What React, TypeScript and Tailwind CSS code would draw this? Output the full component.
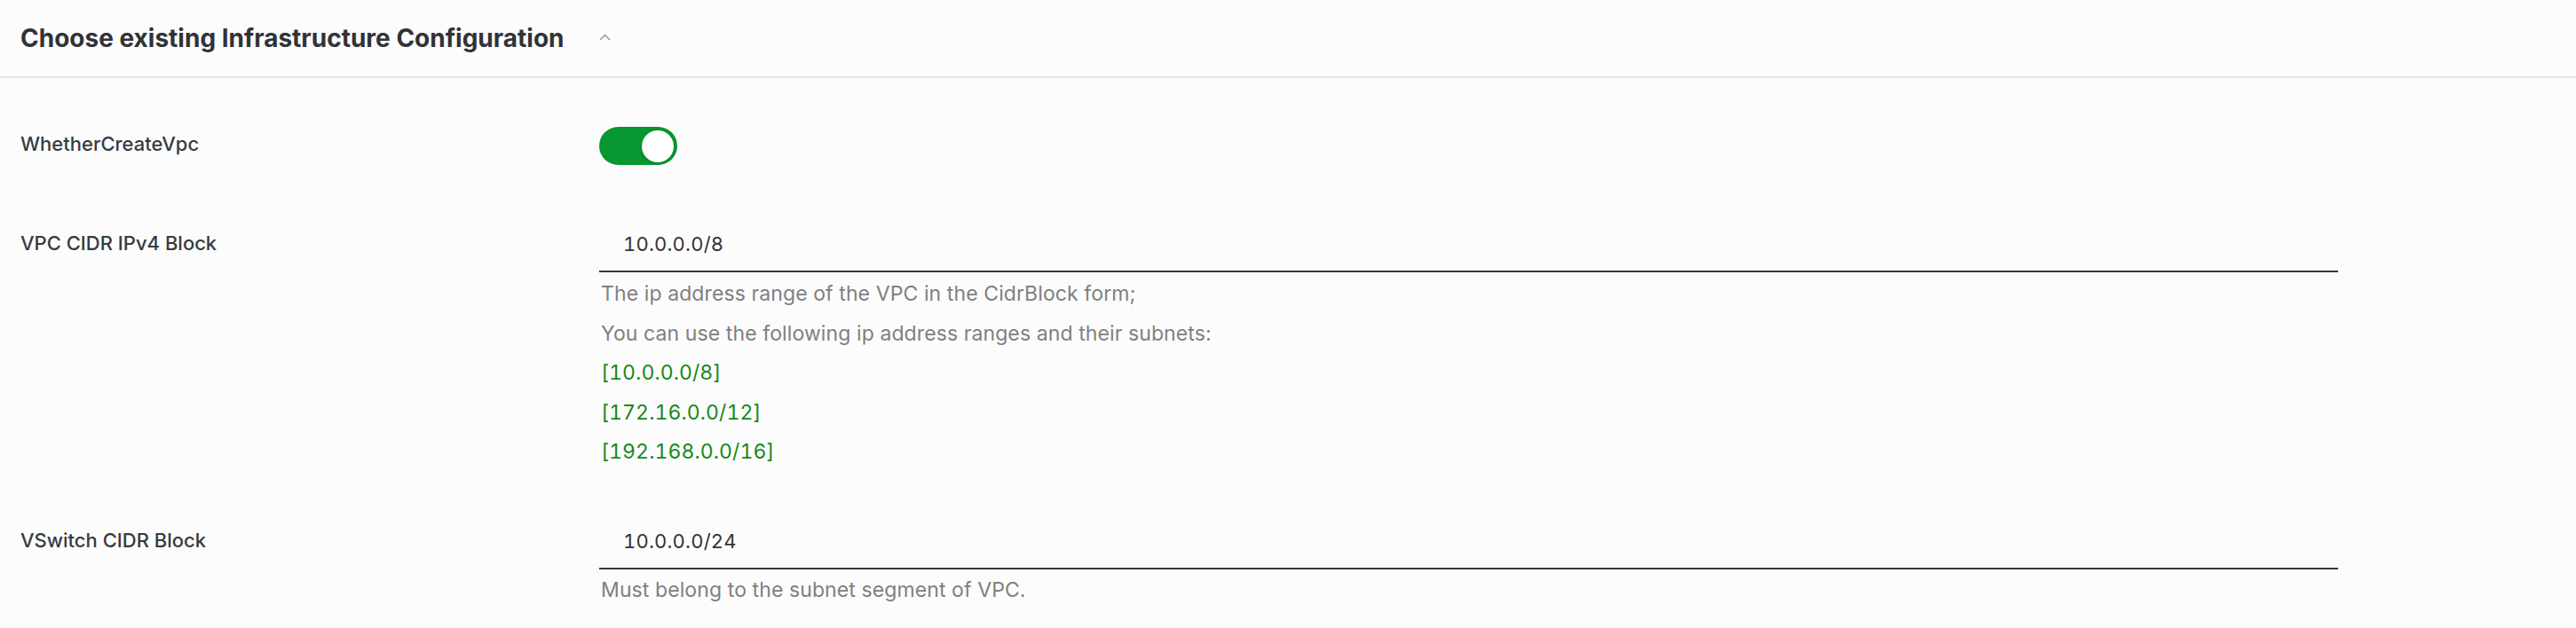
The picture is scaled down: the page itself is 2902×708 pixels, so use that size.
import { useState } from "react";

const ranges = ["[10.0.0.0/8]", "[172.16.0.0/12]", "[192.168.0.0/16]"];

function Toggle({ on, onChange }: { on: boolean; onChange: () => void }) {
  return (
    <button
      type="button"
      role="switch"
      aria-checked={on}
      onClick={onChange}
      className={`flex h-[43px] w-[88px] items-center rounded-full px-[4px] ${
        on ? "bg-[#07962f] justify-end" : "bg-[#cfd3d6] justify-start"
      }`}
    >
      <span className="block h-[36px] w-[36px] rounded-full bg-white shadow-[0_1px_3px_rgba(0,0,0,0.18)]" />
    </button>
  );
}

function Field({ value, onChange }: { value: string; onChange: (v: string) => void }) {
  return (
    <input
      value={value}
      onChange={(e) => onChange(e.target.value)}
      className="box-border h-[52px] w-full border-b-2 border-[#363a3f] bg-transparent pb-[10px] pl-[27px] text-[22px] tracking-[0.2px] tabular-nums text-[#333] outline-none"
    />
  );
}

export default function App() {
  const [createVpc, setCreateVpc] = useState(true);
  const [vpcCidr, setVpcCidr] = useState("10.0.0.0/8");
  const [vswCidr, setVswCidr] = useState("10.0.0.0/24");

  return (
    <div className="min-h-[708px] w-full bg-[#fcfcfc] font-['Inter',sans-serif] text-[#363b41]">
      {/* Section header */}
      <div className="flex h-[88px] items-center border-b-2 border-[#e3e3e3] px-[23px]">
        <h2 className="text-[28px] font-bold leading-[36px] text-[#303338]">
          Choose existing Infrastructure Configuration
        </h2>
        <svg className="ml-[39px] mt-[-2px]" width="13" height="8" viewBox="0 0 13 8" fill="none">
          <polyline points="1,7 6.5,1.5 12,7" stroke="#8e8e8e" strokeWidth="1.3" />
        </svg>
      </div>

      <div className="px-[23px]">
        {/* WhetherCreateVpc */}
        <div className="mt-[55px] flex items-start">
          <div className="mt-[4px] w-[652px] text-[22px] font-medium leading-[30px]">WhetherCreateVpc</div>
          <Toggle on={createVpc} onChange={() => setCreateVpc((v) => !v)} />
        </div>

        {/* VPC CIDR */}
        <div className="mt-[69px] flex items-start">
          <div className="mt-[4px] w-[652px] text-[22px] font-medium leading-[30px]">VPC CIDR IPv4 Block</div>
          <div className="w-[1959px]">
            <Field value={vpcCidr} onChange={setVpcCidr} />
            <div className="mt-[2px] pl-[2px] text-[23px] leading-[44.5px] tracking-[0.1px]">
              <p className="text-[#808080]">The ip address range of the VPC in the CidrBlock form;</p>
              <p className="text-[#808080]">You can use the following ip address ranges and their subnets:</p>
              {ranges.map((r) => (
                <p key={r} className="tabular-nums text-[#16881b]">
                  {r}
                </p>
              ))}
            </div>
          </div>
        </div>

        {/* VSwitch CIDR */}
        <div className="mt-[58px] flex items-start">
          <div className="mt-[4px] w-[652px] text-[22px] font-medium leading-[30px]">VSwitch CIDR Block</div>
          <div className="w-[1959px]">
            <Field value={vswCidr} onChange={setVswCidr} />
            <p className="mt-[1px] pl-[2px] text-[23px] leading-[44.5px] tracking-[0.1px] text-[#808080]">
              Must belong to the subnet segment of VPC.
            </p>
          </div>
        </div>
      </div>
    </div>
  );
}
